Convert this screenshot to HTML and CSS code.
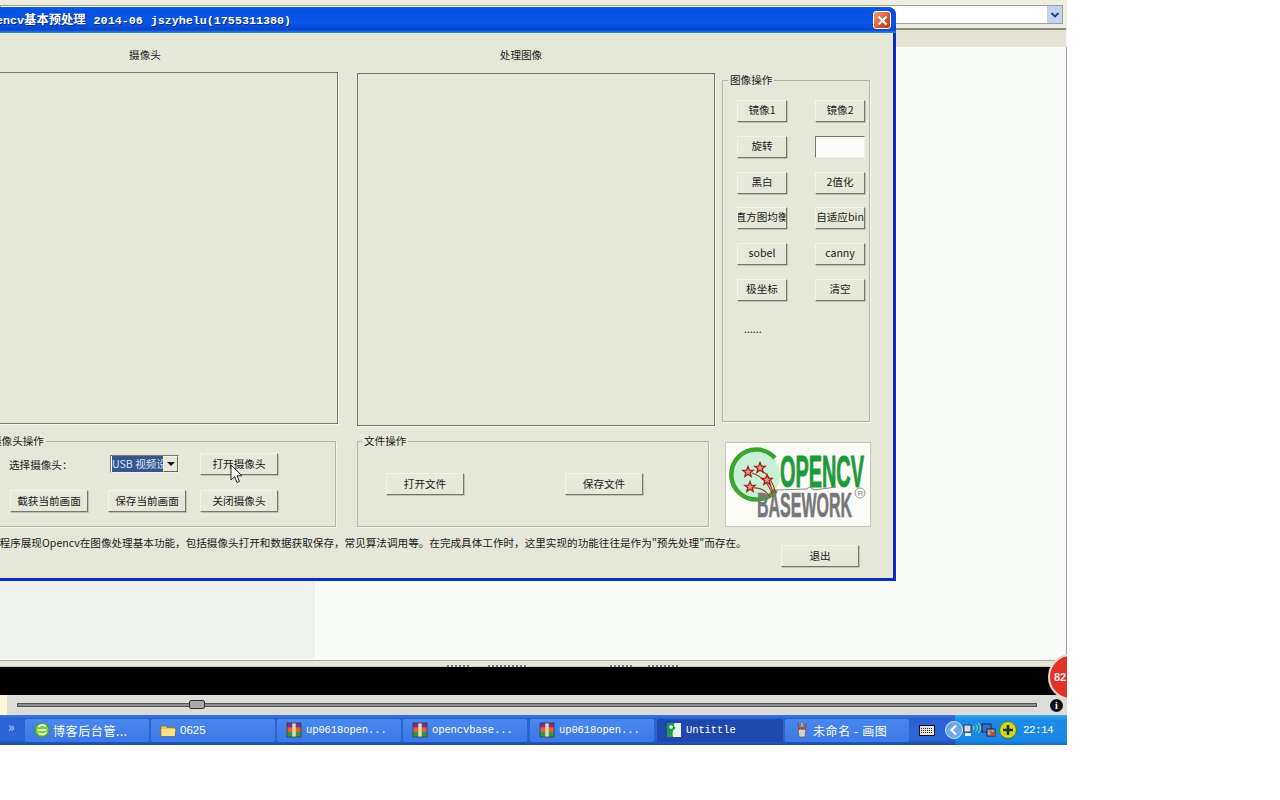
FILE: index.html
```html
<!DOCTYPE html>
<html lang="zh-CN">
<head>
<meta charset="UTF-8" />
<title>Opencv基本预处理</title>
<link rel="stylesheet" href="styles.css">
</head>
<body>

<svg class="defs" width="0" height="0">
  <symbol id="i-rar" viewBox="0 0 16 16">
    <rect x="1" y="1" width="14" height="4.6" fill="#8a2a8e"/>
    <rect x="1" y="5.6" width="14" height="4.8" fill="#e0662a"/>
    <rect x="1" y="10.4" width="14" height="4.6" fill="#2f9a46"/>
    <rect x="6.3" y="1" width="3.4" height="14" fill="#e8d9b0"/>
    <rect x="1" y="1" width="14" height="14" fill="none" stroke="#333" stroke-width=".7"/>
  </symbol>
  <polygon id="star" points="0,-5.5 1.4,-1.8 5.2,-1.7 2.2,.7 3.2,4.4 0,2.2 -3.2,4.4 -2.2,.7 -5.2,-1.7 -1.4,-1.8" fill="#e89a8a" stroke="#a3231a" stroke-width="1.300"/>
</svg>

<div class="screen">
  <div class="back-top">
    <div class="combo"><span class="combo-arrow"><svg width="10" height="8" viewBox="0 0 10 8"><path d="M1.5 2 5 5.5 8.500 2" fill="none" stroke="#26407a" stroke-width="1.800"/></svg></span></div>
  </div>
  <div class="back-bar"></div>
  <div class="back-content"><div class="back-panel"></div></div>
  <div class="back-lines">
    <span class="cut-text cut-1"></span>
    <span class="cut-text cut-2"></span>
    <span class="cut-text cut-3"></span>
    <span class="cut-text cut-4"></span>
  </div>
  <div class="video-bar"></div>

  <div class="slider-bar">
    <span class="slider-edge"></span>
    <div class="slider-track"><span class="slider-thumb"></span></div>
    <span class="info-icon">i</span>
  </div>

  <div class="taskbar">
    <span class="quick">»</span>
    <div class="task">
      <svg class="task-icon" viewBox="0 0 16 16"><circle cx="8" cy="8" r="7" fill="#7ccf3f" stroke="#3d9a2c"/><path d="M3.500 8h9M4.500 11c3 2 6 1.500 8-.5M4.500 5c2-2.500 5.500-2.500 7.500-.5" fill="none" stroke="#fff" stroke-width="1.500"/></svg>
      <span class="task-cjk">博客后台管...</span>
    </div>
    <div class="task">
      <svg class="task-icon" viewBox="0 0 16 16"><path d="M1 4h5l1 1.500h8V14H1z" fill="#f0c94f" stroke="#8d6f1f" stroke-width=".7"/><path d="M1.500 7h14L14.500 14H1.500z" fill="#fde28a"/></svg>
      <span class="task-num">0625</span>
    </div>
    <div class="task">
      <svg class="task-icon"><use href="#i-rar"/></svg>
      <span class="task-mono">up0618open...</span>
    </div>
    <div class="task">
      <svg class="task-icon"><use href="#i-rar"/></svg>
      <span class="task-mono">opencvbase...</span>
    </div>
    <div class="task task-shift">
      <svg class="task-icon"><use href="#i-rar"/></svg>
      <span class="task-mono">up0618open...</span>
    </div>
    <div class="task task-shift task-active">
      <svg class="task-icon" viewBox="0 0 16 16"><rect x="1" y="1" width="14" height="14" fill="#e8f4e4"/><path d="M1 1h8c-2 2-1 4 1 5-3 1-4 4-3 9H1z" fill="#1d9a49"/><circle cx="5" cy="5" r="1.800" fill="#fff"/></svg>
      <span class="task-mono">Untittle</span>
    </div>
    <div class="task task-paint">
      <svg class="task-icon" viewBox="0 0 16 16"><path d="M4 7h8l-1 8H5z" fill="#d8d2c0" stroke="#5c5240" stroke-width=".7"/><path d="M5 8 4 1M8 8V1M11 8l1-7" stroke="#b0442e" stroke-width="1.500"/><path d="M8 5V1" stroke="#e0b83a" stroke-width="1.500"/></svg>
      <span class="task-cjk">未命名 - 画图</span>
    </div>
    <svg class="kbd-icon" viewBox="0 0 16 11"><rect x=".5" y=".5" width="15" height="10" fill="#e4e4e4" stroke="#111"/><path d="M2 3.500h12M2 5.500h12M2 7.500h12" stroke="#222" stroke-dasharray="1 1"/></svg>
    <div class="tray">
      <span class="tray-back"><svg width="10" height="12" viewBox="0 0 10 12"><path d="M7 1.500 2.500 6 7 10.500" fill="none" stroke="#fff" stroke-width="2.200"/></svg></span>
      <svg class="tray-wifi" viewBox="0 0 20 16"><rect x="2" y="3" width="7" height="7" fill="#cfe0f5" stroke="#334"/><rect x="3" y="11" width="6" height="3" fill="#e8e8e8"/><path d="M11 4c1.500 1 1.500 3 0 4M13.500 2.500c2.500 2 2.500 5 0 7M16 1c3.500 3 3.500 7 0 10" fill="none" stroke="#8ef07c"/></svg>
      <svg class="tray-net" viewBox="0 0 16 16"><rect x="1" y="2" width="9" height="8" fill="#3a6fd0" stroke="#223"/><rect x="6" y="7" width="8" height="7" fill="#8aa" stroke="#223"/><path d="m9 9 5 5M14 9l-5 5" stroke="#e0352a" stroke-width="1.500"/></svg>
      <svg class="tray-plus" viewBox="0 0 18 18"><circle cx="9" cy="9" r="8.500" fill="#d9d21e" stroke="#2a8a2a"/><path d="M9 4v10M4 9h10" stroke="#123a12" stroke-width="2.600"/></svg>
      <span class="clock">22:14</span>
    </div>
  </div>

  <span class="badge">82</span>

  <div class="dialog">
    <div class="titlebar">
      <span class="title-text">Opencv<span class="title-cjk">基本预处理</span> 2014-06 jszyhelu(1755311380)</span>
      <span class="close-btn"><svg width="11" height="11" viewBox="0 0 11 11"><path d="m1.500 1.500 8 8M9.500 1.500l-8 8" stroke="#fff" stroke-width="2.200"/></svg></span>
    </div>
    <div class="dialog-body">
      <div class="row-top">
        <div class="col-camera">
          <div class="view-label">摄像头</div>
          <div class="view-frame frame-camera"></div>
        </div>
        <div class="col-result">
          <div class="view-label label-result">处理图像</div>
          <div class="view-frame frame-result"></div>
        </div>
        <fieldset class="group group-image">
          <legend>图像操作</legend>
          <div class="btn-grid">
            <button class="btn">镜像1</button>
            <button class="btn">镜像2</button>
            <button class="btn">旋转</button>
            <input class="num-input" type="text" />
            <button class="btn">黑白</button>
            <button class="btn">2值化</button>
            <button class="btn">直方图均衡</button>
            <button class="btn">自适应bin</button>
            <button class="btn">sobel</button>
            <button class="btn">canny</button>
            <button class="btn">极坐标</button>
            <button class="btn">清空</button>
          </div>
          <div class="dots">......</div>
        </fieldset>
      </div>

      <div class="row-bottom">
        <fieldset class="group group-cam">
          <legend>摄像头操作</legend>
          <div class="cam-row">
            <span class="cam-label">选择摄像头：</span>
            <div class="select"><span class="select-text">USB 视频设备</span><span class="select-arrow"></span></div>
            <button class="btn btn-wide btn-open">打开摄像头</button>
          </div>
          <div class="cam-row cam-row-2">
            <button class="btn btn-wide">截获当前画面</button>
            <button class="btn btn-wide btn-save">保存当前画面</button>
            <button class="btn btn-wide btn-shut">关闭摄像头</button>
          </div>
        </fieldset>
        <fieldset class="group group-file">
          <legend>文件操作</legend>
          <div class="file-row">
            <button class="btn btn-wide">打开文件</button>
            <button class="btn btn-wide">保存文件</button>
          </div>
        </fieldset>
        <div class="logo">
          <svg width="144" height="83" viewBox="0 0 144 83">
            <circle cx="30" cy="32" r="24" fill="#c8f0d6"/>
            <path d="M49 15A25 25 0 1 0 50 47" fill="none" stroke="#3ba52f" stroke-width="4.500"/>
            <path d="M26 30c10 3 18 12 21 24M35 27c7 4 12 12 15 24M41 38c3 3 5 7 6 12M27 45c7-1 13 3 17 9" fill="none" stroke="#b6332a" stroke-width="1.200"/>
            <use href="#star" x="22" y="29"/>
            <use href="#star" x="34" y="25"/>
            <use href="#star" x="41" y="37"/>
            <use href="#star" x="24" y="44"/>
            <text class="logo-open" x="54" y="44" textLength="84" lengthAdjust="spacingAndGlyphs">OPENCV</text>
            <text class="logo-base" x="31" y="74" textLength="95" lengthAdjust="spacingAndGlyphs">BASEWORK</text>
            <path d="M50 47 80 46 84 44 88 47 110 44" fill="none" stroke="#888" stroke-width="1"/>
            <circle cx="134" cy="50" r="5" fill="none" stroke="#999"/>
            <text class="logo-r" x="131.500" y="53">R</text>
          </svg>
        </div>
      </div>

      <div class="row-status">
        <span class="status-text">本程序展现Opencv在图像处理基本功能，包括摄像头打开和数据获取保存，常见算法调用等。在完成具体工作时，这里实现的功能往往是作为"预先处理"而存在。</span>
        <button class="btn btn-wide btn-exit">退出</button>
      </div>
    </div>
  </div>

  <svg class="cursor" width="13" height="20" viewBox="0 0 13 20"><path d="M1 1v15l3.500-3.300L7 18.500l2.500-1L7 11.800h5z" fill="#fff" stroke="#222"/></svg>
</div>

</body>
</html>
```

FILE: styles.css
```css
* {
  box-sizing: border-box;
}
body {
  margin: 0;
  background: white;
  font-family: "Noto Sans CJK SC", "Liberation Sans", sans-serif;
  font-size: 10.600px;
  color: #1c1c1c;
}
.defs {
  position: absolute;
}
.screen {
  position: relative;
  width: 1067px;
  height: 745px;
  overflow: hidden;
  display: flex;
  flex-direction: column;
  background: #f9fbf8;
}

/* the window behind the dialog */
.back-top {
  height: 28px;
  padding: 5px 4px 4px 0;
  background: #f0eee0;
}
.combo {
  height: 19px;
  background: white;
  border: 1px solid #9aa0a0;
  display: flex;
  justify-content: flex-end;
}
.combo-arrow {
  width: 15px;
  background: #c3d2ee;
  display: flex;
  align-items: center;
  justify-content: center;
}
.back-bar {
  height: 19px;
  margin-right: 1px;
  background: #e4e3d4;
  border-top: 2px solid #8d8d85;
}
.back-content {
  flex: 1;
  border-right: 1px solid #a5a5a5;
  display: flex;
  flex-direction: column;
  justify-content: flex-end;
}
.back-panel {
  width: 315px;
  height: 78px;
  background: #eff1ef;
  margin-bottom: 1px;
}
.back-lines {
  position: relative;
  height: 7px;
  background: #e6e5d8;
  border-top: 1px solid #a9a9a0;
  border-bottom: 1px solid #c9c8bc;
}
/* tops of a text line that the black bar cuts off */
.cut-text {
  position: absolute;
  bottom: -1px;
  height: 2px;
  background: repeating-linear-gradient(90deg, #777 0 2px, #ddd 2px 4px);
}
.cut-1 {
  left: 447px;
  width: 24px;
}
.cut-2 {
  left: 488px;
  width: 39px;
}
.cut-3 {
  left: 610px;
  width: 22px;
}
.cut-4 {
  left: 648px;
  width: 30px;
}
.video-bar {
  height: 28px;
  background: black;
}

.slider-bar {
  height: 20px;
  background: #dcdcd8;
  display: flex;
  align-items: center;
}
.slider-edge {
  width: 7px;
  height: 20px;
  background: #fbf8d8;
}
.slider-track {
  position: relative;
  width: 1020px;
  height: 4px;
  margin-left: 10px;
  background: #8f8f8f;
  border: 1px solid #555;
}
.slider-thumb {
  position: absolute;
  left: 171px;
  top: -4px;
  width: 16px;
  height: 9px;
  background: #a8a8a8;
  border: 1px solid #333;
  border-radius: 2px;
}
.info-icon {
  width: 13px;
  height: 13px;
  margin-left: 13px;
  border-radius: 50%;
  background: #111;
  color: white;
  font: bold 10px/13px "Liberation Serif", serif;
  text-align: center;
}

.taskbar {
  height: 30px;
  display: flex;
  align-items: center;
  background: linear-gradient(#3a78e0, #2a62d2 12%, #2b66d8 80%, #1d48a8);
  color: white;
}
.quick {
  width: 25px;
  padding-left: 8px;
  margin-top: -8px;
  font-size: 14px;
  color: #bcd2f5;
}
.task {
  width: 124px;
  height: 23px;
  margin-right: 2px;
  padding-left: 9px;
  display: flex;
  align-items: center;
  gap: 4px;
  background: linear-gradient(#4a88ee, #3b78e6);
  border-radius: 2px;
  white-space: nowrap;
  overflow: hidden;
}
.task-shift {
  margin-left: 1px;
}
.task-active {
  width: 126px;
  background: #1e48ae;
}
.task-paint {
  margin-right: 0;
}
.task-icon {
  width: 16px;
  height: 16px;
  flex-shrink: 0;
}
.task-mono {
  font: 10.500px "Liberation Mono", monospace;
  letter-spacing: -.1px;
}
.task-cjk {
  margin-left: -1px;
  font-size: 12px;
  letter-spacing: .6px;
}
.task-num {
  font: 11.500px "Liberation Sans", sans-serif;
}
.kbd-icon {
  width: 16px;
  height: 11px;
  margin-left: 10px;
}
.tray {
  position: relative;
  height: 30px;
  margin-left: 20px;
  flex: 1;
  display: flex;
  align-items: center;
  padding-left: 7px;
  background: linear-gradient(#3ab0f0, #1c8ce8 15%, #1a86e4 85%, #146cc8);
}
.tray-back {
  position: absolute;
  left: -10px;
  top: 6px;
  width: 18px;
  height: 18px;
  border-radius: 50%;
  background: #6aa8ec;
  border: 1px solid #cfe3fa;
  display: flex;
  align-items: center;
  justify-content: center;
}
.tray-wifi {
  width: 20px;
  height: 16px;
  flex-shrink: 0;
}
.tray-net {
  width: 16px;
  height: 16px;
  flex-shrink: 0;
  margin-left: -1px;
}
.tray-plus {
  width: 18px;
  height: 18px;
  flex-shrink: 0;
  margin-left: 2px;
}
.clock {
  margin-left: 6px;
  font: 11px "Liberation Mono", monospace;
  letter-spacing: -.6px;
}

.badge {
  position: absolute;
  left: 1048px;
  top: 654px;
  width: 46px;
  height: 46px;
  padding-left: 4px;
  border-radius: 50%;
  background: #e2332a;
  border: 2px solid #e8d8d0;
  color: #f6eaea;
  font: bold 11px/42px "Liberation Sans", sans-serif;
}
.cursor {
  position: absolute;
  left: 230px;
  top: 464px;
}

/* dialog, runs off the left of the picture */
.dialog {
  position: absolute;
  left: -60px;
  top: 7px;
  width: 956px;
  height: 574px;
  display: flex;
  flex-direction: column;
  background: #0a2ec0;
  border-radius: 8px 8px 0 0;
  padding: 0 3px 3px;
  overflow: hidden;
}
.titlebar {
  height: 26px;
  margin: 0 -3px;
  padding: 0 5px 2px 42px;
  display: flex;
  align-items: center;
  justify-content: space-between;
  background: linear-gradient(#0a5ae6, #0450e0 15%, #0a56e8 60%, #0646c8 88%, #3a86ee);
}
.title-text {
  font: bold 11.700px "Liberation Mono", "Noto Sans CJK SC", monospace;
  word-spacing: 1px;
  color: white;
  white-space: pre;
  text-shadow: 1px 1px 0 #0a2a90;
}
.title-cjk {
  font-size: 12.300px;
}
.close-btn {
  width: 18px;
  height: 18px;
  margin-top: 2px;
  background: linear-gradient(135deg, #f0a080, #d8502c 60%, #c03a1c);
  border: 1px solid white;
  border-radius: 3px;
  display: flex;
  align-items: center;
  justify-content: center;
}
.dialog-body {
  flex: 1;
  padding-left: 9px;
  background: #e5e7d8;
}

.row-top {
  display: flex;
  height: 393px;
}
.col-camera {
  width: 386px;
  margin-right: 19px;
  padding-top: 12px;
}
.col-result {
  width: 358px;
  margin-right: 7px;
  padding-top: 12px;
}
.view-label {
  height: 20px;
  margin-bottom: 7px;
  text-align: center;
  line-height: 20px;
}
.label-result {
  margin-bottom: 8px;
  padding-right: 30px;
}
.view-frame {
  border: 1px solid #77776a;
  box-shadow: 1px 1px 0 #f4f4ea;
}
.frame-camera {
  height: 352px;
}
.frame-result {
  height: 353px;
}

.group {
  margin: 0;
  padding: 0;
  min-width: 0;
  border: 1px solid #b4b4a5;
  box-shadow: 1px 1px 0 #f6f6ee;
}
.group legend {
  padding: 0 2px;
  line-height: 16px;
}
.group-image {
  width: 148px;
  height: 350px;
  margin-top: 39px;
  padding: 12px 0 0 14px;
}
.group-image legend {
  margin-left: -9px;
}
.btn-grid {
  display: grid;
  grid-template-columns: 50px 50px;
  grid-auto-rows: 22px;
  column-gap: 28px;
  row-gap: 13.800px;
}
.btn {
  display: flex;
  align-items: center;
  justify-content: center;
  width: 100%;
  padding: 0 0 2px;
  font-family: inherit;
  font-size: 10.600px;
  color: #1c1c1c;
  white-space: nowrap;
  overflow: hidden;
  background: #e6e8d9;
  border: 1px solid;
  border-color: #f3f4e8 #77786a #77786a #f3f4e8;
  box-shadow: 1px 1px 0 #c2c2b4;
}
.btn-grid .btn {
  padding-bottom: 3px;
}
.num-input {
  width: 50px;
  height: 22px;
  padding: 0;
  background: #fbfdfb;
  border: 1px solid;
  border-color: #77776a #f0f0e6 #f0f0e6 #77776a;
}
.dots {
  margin: 20px 0 0 7px;
  line-height: 16px;
}

.row-bottom {
  display: flex;
  margin-top: 7px;
  height: 94px;
}
.group-cam {
  width: 384px;
  margin-right: 21px;
  padding: 4px 0 0 57px;
}
.group-cam legend {
  margin-left: -21px;
}
.group-file {
  width: 352px;
  margin-right: 16px;
  padding: 24px 0 0 28px;
}
.group-file legend {
  margin-left: -24px;
}
.cam-row {
  display: flex;
  align-items: center;
  height: 22px;
}
.cam-row-2 {
  margin-top: 15px;
}
.cam-label {
  width: 101px;
  margin-left: -1px;
}
.btn-wide {
  width: 78px;
  height: 22px;
  flex-shrink: 0;
}
.btn-open {
  margin-left: 21px;
}
.btn-save {
  margin-left: 20px;
}
.btn-shut {
  margin-left: 14px;
}
.select {
  width: 69px;
  height: 18px;
  display: flex;
  align-items: stretch;
  background: white;
  border: 1px solid;
  border-color: #77776a #f0f0e6 #f0f0e6 #77776a;
}
.select-text {
  flex: 1;
  overflow: hidden;
  white-space: nowrap;
  background: #35568f;
  color: #d8e4f5;
  font-size: 10.600px;
  line-height: 15px;
  margin: 0 0 0 1px;
}
.select-arrow {
  position: relative;
  width: 15px;
  background: #e7e8da;
  border: 1px solid;
  border-color: #f6f6ee #66675a #66675a #f6f6ee;
}
.select-arrow::after {
  content: "";
  position: absolute;
  left: 3px;
  top: 5px;
  border: 4px solid transparent;
  border-top-color: #111;
  border-bottom: 0;
}
.file-row {
  display: flex;
  gap: 101px;
}
.logo {
  width: 146px;
  height: 85px;
  margin-top: 9px;
  background: #fbfcf8;
  border: 1px solid #c6c6b8;
}
.logo-open {
  font: bold 44px "Liberation Sans", sans-serif;
  fill: #1f9a3a;
  stroke: #1f9a3a;
  stroke-width: 1px;
}
.logo-base {
  font: bold 35px "Liberation Sans", sans-serif;
  fill: #77777a;
  stroke: #77777a;
  stroke-width: .6px;
}
.logo-r {
  font: 8px "Liberation Sans", sans-serif;
  fill: #888;
}

.row-status {
  display: flex;
  margin-top: 8px;
}
.status-text {
  flex-shrink: 0;
  margin-left: 37px;
  line-height: 16px;
  white-space: nowrap;
}
.btn-exit {
  margin: 10px 34px 0 auto;
}
```
